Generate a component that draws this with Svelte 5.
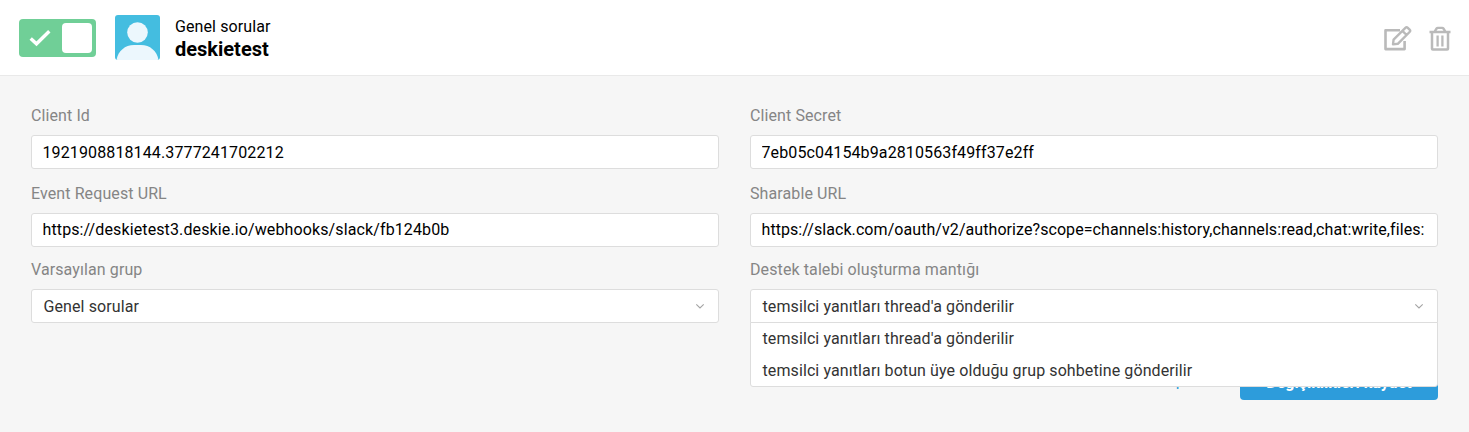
<script lang="ts">
	type Option = { id: string; label: string };

	let enabled = true;
	let open = true;

	const channel = { name: 'deskietest', group: 'Genel sorular' };

	const fields = [
		{ id: 'client-id', label: 'Client Id', value: '1921908818144.3777241702212' },
		{ id: 'client-secret', label: 'Client Secret', value: '7eb05c04154b9a2810563f49ff37e2ff' },
		{
			id: 'event-url',
			label: 'Event Request URL',
			value: 'https://deskietest3.deskie.io/webhooks/slack/fb124b0b'
		},
		{
			id: 'sharable-url',
			label: 'Sharable URL',
			value:
				'https://slack.com/oauth/v2/authorize?scope=channels:history,channels:read,chat:write,files:'
		}
	];

	const logicOptions: Option[] = [
		{ id: 'thread', label: "temsilci yanıtları thread'a gönderilir" },
		{ id: 'group', label: 'temsilci yanıtları botun üye olduğu grup sohbetine gönderilir' }
	];
	let selected = logicOptions[0];

	function choose(option: Option) {
		selected = option;
		open = false;
	}
</script>

<header class="header">
	<button
		class="toggle"
		class:off={!enabled}
		aria-label="Aktif"
		aria-pressed={enabled}
		on:click={() => (enabled = !enabled)}
	>
		<svg class="check" width="22" height="18" viewBox="0 0 22 18">
			<path d="M1.7 9.4 L7.5 14.8 L20.3 2.2" fill="none" stroke="#fff" stroke-width="3.4" />
		</svg>
		<span class="knob"></span>
	</button>
	<svg class="avatar" width="45" height="45" viewBox="0 0 45 45">
		<rect width="45" height="45" fill="#44bde0" />
		<circle cx="22.5" cy="17.5" r="10.3" fill="#ecf7fd" />
		<path d="M1.5 45 C3 36 10 30 19 30 H26 C35 30 42 36 43.5 45 Z" fill="#ecf7fd" />
	</svg>
	<div class="title">
		<span class="group">{channel.group}</span>
		<strong class="name">{channel.name}</strong>
	</div>
	<div class="actions">
		<button class="icon" aria-label="Düzenle">
			<svg width="28" height="26" viewBox="0 0 28 26" fill="none" stroke="#bababa">
				<path d="M16 5.2 H1.5 V24.1 H20.6 V16" stroke-width="2.6" stroke-linejoin="round" />
				<path
					d="M9 19.4 L9.6 14.6 L21.4 2.8 Q22.6 1.6 23.8 2.8 L25.6 4.6 Q26.8 5.8 25.6 7 L13.8 18.8 Z M18.4 5.8 L22.6 10"
					stroke-width="2.4"
					stroke-linejoin="round"
				/>
			</svg>
		</button>
		<button class="icon" aria-label="Sil">
			<svg width="22" height="26" viewBox="0 0 22 26" fill="none" stroke="#bababa">
				<path
					d="M0.5 6.9 H21.5 M3 6.9 V23.8 Q3 24.6 3.8 24.6 H18.2 Q19 24.6 19 23.8 V6.9"
					stroke-width="2.5"
				/>
				<path d="M5.8 6.4 L7.6 3.5 Q8 2.9 8.8 2.9 H13.2 Q14 2.9 14.4 3.5 L16.2 6.4" stroke-width="2.4" />
				<path d="M8.6 10.4 V21.4 M13.4 10.4 V21.4" stroke-width="2.3" />
			</svg>
		</button>
	</div>
</header>

<main class="form">
	<div class="grid">
		{#each fields as field}
			<div class="field">
				<label for={field.id}>{field.label}</label>
				<input id={field.id} value={field.value} readonly />
			</div>
		{/each}
		<div class="field last">
			<span class="label">Varsayılan grup</span>
			<button class="select">
				{channel.group}
				<svg class="arrow" width="10" height="6" viewBox="0 0 10 6">
					<path d="M1.3 1.3 L5 4.9 L8.7 1.3" />
				</svg>
			</button>
		</div>
		<div class="field last">
			<span class="label">Destek talebi oluşturma mantığı</span>
			<div class="dropdown">
				<button class="select" class:open on:click={() => (open = !open)}>
					{selected.label}
					<svg class="arrow" width="10" height="6" viewBox="0 0 10 6">
						<path d="M1.3 1.3 L5 4.9 L8.7 1.3" />
					</svg>
				</button>
				{#if open}
					<div class="menu">
						{#each logicOptions as option}
							<button class="option" on:click={() => choose(option)}>{option.label}</button>
						{/each}
					</div>
				{/if}
			</div>
		</div>
	</div>
	<div class="footer">
		<button class="cancel">İptal</button>
		<button class="save">Değişiklikleri kaydet</button>
	</div>
</main>

<style>
	:global(body) {
		background-color: #f6f6f6;
		font-family: Roboto, sans-serif;
		font-size: 16px;
		letter-spacing: 0.1px;
		color: #000;
	}

	button,
	input {
		box-sizing: border-box;
		margin: 0;
		padding: 0;
		border: 0;
		background: none;
		font: inherit;
		letter-spacing: inherit;
		color: inherit;
		text-align: left;
	}

	.header {
		display: flex;
		align-items: center;
		box-sizing: border-box;
		height: 76px;
		padding: 0 18px 0 19px;
		border-bottom: 1px solid #e9e9e9;
		background-color: #fff;
	}

	.toggle {
		display: flex;
		align-items: center;
		justify-content: space-between;
		width: 77px;
		height: 38px;
		margin-right: 19px;
		padding: 0 4px 0 10px;
		border-radius: 4px;
		background-color: #70cf97;
	}

	.toggle.off {
		background-color: #ccc;
	}

	.knob {
		width: 30px;
		height: 30px;
		border-radius: 4px;
		background-color: #fff;
	}

	.avatar {
		border-radius: 3px;
	}

	.title {
		display: flex;
		flex-direction: column;
		margin-left: 15px;
		padding-top: 2px;
	}

	.group {
		line-height: 22px;
	}

	.name {
		font-size: 20px;
		font-weight: 700;
		line-height: 23px;
		letter-spacing: 0;
	}

	.actions {
		display: flex;
		gap: 17px;
		margin-left: auto;
	}

	.icon {
		display: flex;
	}

	.form {
		padding: 28px 31px 31px;
	}

	.grid {
		display: grid;
		grid-template-columns: 1fr 1fr;
		column-gap: 31px;
	}

	.field {
		display: flex;
		flex-direction: column;
		height: 78px;
		min-width: 0;
	}

	.field.last {
		height: 65px;
		margin-top: -2px;
	}

	label,
	.label {
		height: 31px;
		line-height: 24px;
		color: #858585;
	}

	input,
	.select {
		width: 100%;
		height: 34px;
		padding: 0 11px;
		border: 1px solid #ddd;
		border-radius: 3px;
		background-color: #fff;
	}

	input {
		padding: 0 10px 0 10.5px;
		outline: none;
		letter-spacing: 0.12px;
	}

	#event-url,
	#sharable-url {
		padding-bottom: 1px;
	}

	#sharable-url {
		letter-spacing: 0.07px;
	}

	.select {
		display: flex;
		align-items: center;
		justify-content: space-between;
		padding: 0 13px 0 11.5px;
		color: #333;
	}

	.select.open {
		border-radius: 3px 3px 0 0;
	}

	.arrow path {
		fill: none;
		stroke: #a4a4a4;
		stroke-width: 1.1;
	}

	.dropdown {
		position: relative;
	}

	.menu {
		position: absolute;
		z-index: 1;
		top: 33px;
		left: 0;
		right: 0;
		border: 1px solid #ddd;
		border-radius: 0 0 3px 3px;
		background-color: #fff;
	}

	.option {
		display: block;
		width: 100%;
		height: 32px;
		padding: 0 11.5px;
		color: #333;
	}

	.option:first-child {
		margin-top: -1px;
	}

	.footer {
		display: flex;
		justify-content: flex-end;
		align-items: center;
		margin-top: 41px;
	}

	.cancel {
		margin-right: 37px;
		padding-bottom: 4px;
		color: #2d9cdb;
	}

	.save {
		width: 198px;
		height: 36px;
		border-radius: 4px;
		background-color: #2d9cdb;
		font-weight: 700;
		letter-spacing: 0;
		color: #fff;
		text-align: center;
	}
</style>
